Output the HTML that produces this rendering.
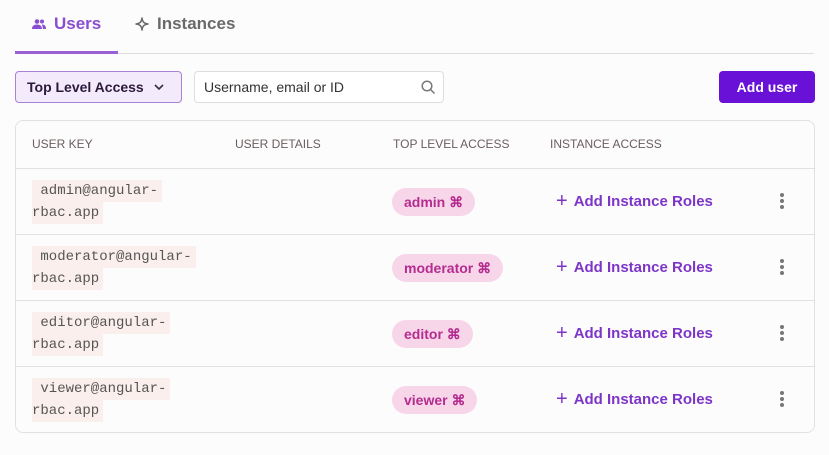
<!DOCTYPE html>
<html><head><style>
*{box-sizing:border-box;margin:0;padding:0}
body{width:829px;height:455px;background:#fdfcfd;font-family:"Liberation Sans",sans-serif;position:relative;overflow:hidden}
.abs{position:absolute}
.tab{font-size:17px;font-weight:bold;top:14px;display:flex;align-items:center;gap:8px}
.hd{font-size:12px;color:#6b5d5d;top:137px}
.row{position:absolute;left:16px;width:798px;height:66px;border-top:1px solid #e3e0e3}
.code{position:absolute;left:16px;top:11px;font-family:"Liberation Mono",monospace;font-size:14px;color:#555;line-height:22px;white-space:pre}
.code span{background:#faefec;display:inline-block;padding:0 4px 0 0}
.chip{position:absolute;left:376px;top:19px;height:28px;border-radius:14px;background:#f8d6ea;color:#b52c8f;font-size:14px;font-weight:bold;padding:0 12px;display:flex;align-items:center;gap:8px}
.add{position:absolute;left:540px;top:21px;color:#7d35c7;font-weight:bold;font-size:15px;display:flex;align-items:center;gap:6px}
.dots{position:absolute;left:764px;top:24px;width:4px}
.dots i{display:block;width:4px;height:4px;border-radius:2px;background:#777;margin-bottom:2px}
</style></head><body>
<div class="abs tab" style="left:32px;color:#8a4fd0">
<svg width="14" height="10" viewBox="0 0 14 10"><circle cx="5" cy="2.5" r="2.3" fill="#8a4fd0"/><circle cx="10" cy="2.5" r="2" fill="#8a4fd0"/><path d="M0 10c0-3 2-4.5 5-4.5s5 1.5 5 4.5z M10 5.5c2.5 0 4 1.3 4 4.5h-3z" fill="#8a4fd0"/></svg>Users</div>
<div class="abs tab" style="left:135px;color:#6a6a6a">
<svg width="14" height="14" viewBox="0 0 14 14"><path d="M7 1C7.5 5 9 6.5 13 7 9 7.5 7.5 9 7 13 6.5 9 5 7.5 1 7 5 6.5 6.5 5 7 1z" fill="none" stroke="#6a6a6a" stroke-width="1.5" stroke-linejoin="round"/></svg>Instances</div>
<div class="abs" style="left:15px;top:53px;width:799px;height:1px;background:#e0dde0"></div>
<div class="abs" style="left:15px;top:51px;width:103px;height:3px;background:#9b5fd6"></div>

<div class="abs" style="left:15px;top:71px;width:167px;height:32px;border:1px solid #a982d6;border-radius:4px;background:#f3eafc;font-size:14px;font-weight:bold;color:#2b1a3a;padding:7px 11px;display:flex;gap:10px;align-items:center">Top Level Access <svg width="10" height="6" viewBox="0 0 10 6"><path d="M1 1l4 4 4-4" fill="none" stroke="#333" stroke-width="1.6"/></svg></div>
<div class="abs" style="left:194px;top:71px;width:250px;height:32px;border:1px solid #e0dde0;border-radius:4px;background:#fff;font-size:14px;color:#333;padding:7px 9px">Username, email or ID
<svg class="abs" style="left:226px;top:8px" width="15" height="15" viewBox="0 0 15 15"><circle cx="6" cy="6" r="4.8" fill="none" stroke="#777" stroke-width="1.5"/><path d="M9.5 9.5l4 4" stroke="#777" stroke-width="1.5"/></svg></div>
<div class="abs" style="left:719px;top:71px;width:96px;height:32px;border-radius:4px;background:#6a11d8;color:#fff;font-weight:bold;font-size:14px;text-align:center;line-height:32px">Add user</div>

<div class="abs" style="left:15px;top:120px;width:800px;height:313px;border:1px solid #e3e0e3;border-radius:8px;background:#fdfcfd"></div>
<div class="abs hd" style="left:32px">USER KEY</div>
<div class="abs hd" style="left:235px">USER DETAILS</div>
<div class="abs hd" style="left:393px">TOP LEVEL ACCESS</div>
<div class="abs hd" style="left:550px">INSTANCE ACCESS</div>

<div class="row" style="top:168px"><div class="code"><span> admin@angular-</span>
<span>rbac.app</span></div><div class="chip">admin ⌘</div><div class="add"><span style="font-size:20px;font-weight:normal">+</span>Add Instance Roles</div><div class="dots"><i></i><i></i><i></i></div></div>
<div class="row" style="top:234px"><div class="code"><span> moderator@angular-</span>
<span>rbac.app</span></div><div class="chip">moderator ⌘</div><div class="add"><span style="font-size:20px;font-weight:normal">+</span>Add Instance Roles</div><div class="dots"><i></i><i></i><i></i></div></div>
<div class="row" style="top:300px"><div class="code"><span> editor@angular-</span>
<span>rbac.app</span></div><div class="chip">editor ⌘</div><div class="add"><span style="font-size:20px;font-weight:normal">+</span>Add Instance Roles</div><div class="dots"><i></i><i></i><i></i></div></div>
<div class="row" style="top:366px"><div class="code"><span> viewer@angular-</span>
<span>rbac.app</span></div><div class="chip">viewer ⌘</div><div class="add"><span style="font-size:20px;font-weight:normal">+</span>Add Instance Roles</div><div class="dots"><i></i><i></i><i></i></div></div>
</body></html>
